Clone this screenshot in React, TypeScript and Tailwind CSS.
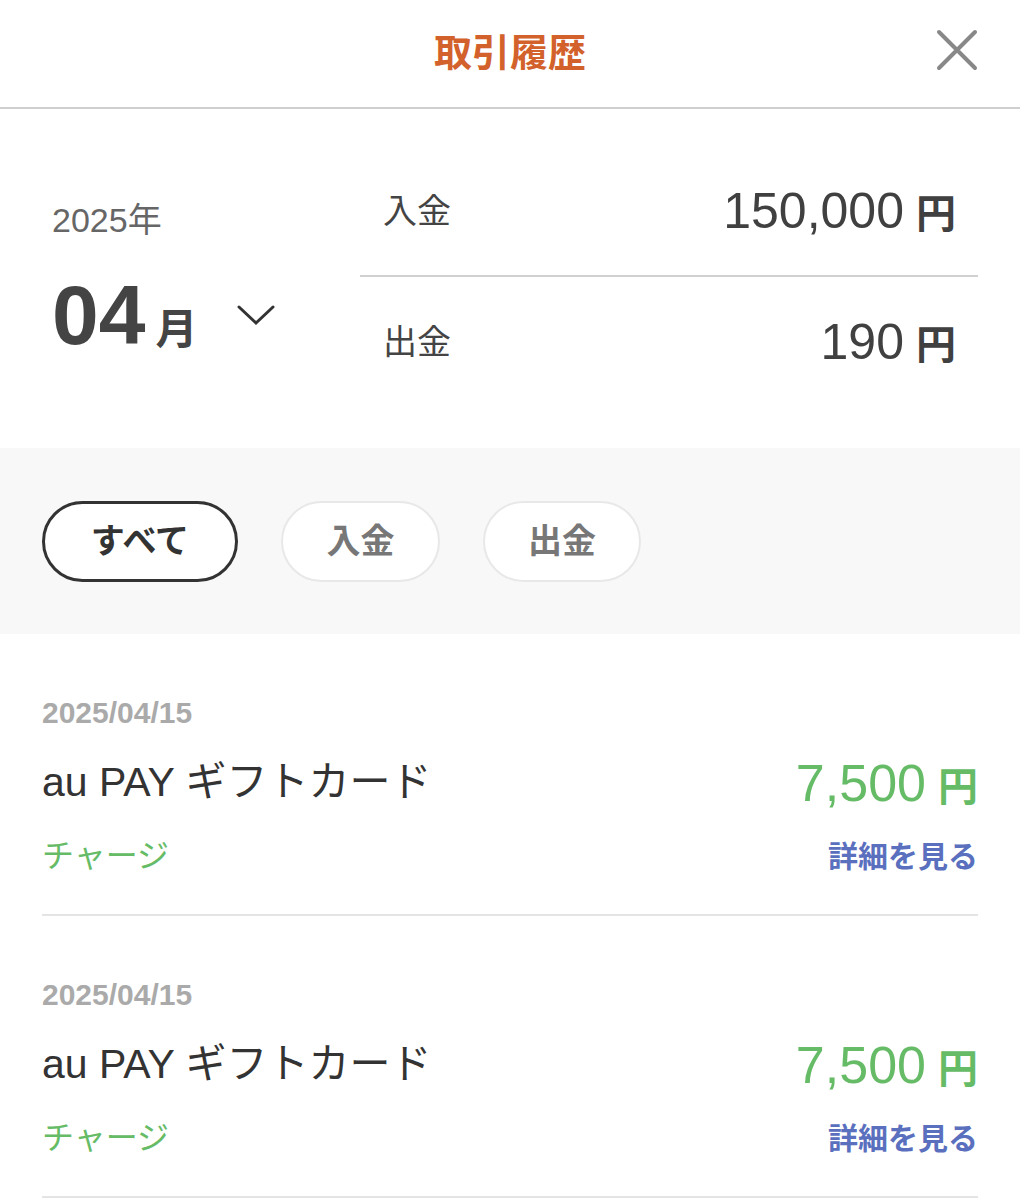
import React from "react";

const font = { fontFamily: '"Liberation Sans", "Noto Sans CJK JP", sans-serif' };

type Tx = { date: string; name: string; kind: string; amount: string };

const txs: Tx[] = [
  { date: "2025/04/15", name: "au PAY ギフトカード", kind: "チャージ", amount: "7,500" },
  { date: "2025/04/15", name: "au PAY ギフトカード", kind: "チャージ", amount: "7,500" },
];

function SummaryRow({ label, amount, line }: { label: string; amount: string; line?: boolean }) {
  return (
    <div
      className={`flex h-[130px] items-center justify-between pl-[23px] pr-[22px] ${
        line ? "border-b-2 border-[#d0d0d0]" : ""
      }`}
    >
      <span className="text-[34px] text-[#444]">{label}</span>
      <span className="flex items-baseline text-[#404040]">
        <span className="text-[50px] leading-none">{amount}</span>
        <span className="ml-[12px] text-[40px] font-bold leading-none">円</span>
      </span>
    </div>
  );
}

function Pill({ label, active, w }: { label: string; active?: boolean; w: string }) {
  return (
    <button
      className={`${w} flex h-[81px] items-center justify-center rounded-full bg-white text-[34px] font-bold ${
        active ? "border-[3px] border-[#333] text-[#333]" : "border-2 border-[#e8e8e8] text-[#777]"
      }`}
    >
      {label}
    </button>
  );
}

function TxItem({ tx }: { tx: Tx }) {
  return (
    <div className="border-b-2 border-[#e4e4e4] pb-[38px]">
      <div className="mt-[64px] h-[30px] text-[30px] font-bold leading-[30px] text-[#aaa]">{tx.date}</div>
      <div className="mt-[27px] flex h-[56px] items-center justify-between">
        <span className="text-[41px] text-[#333]">{tx.name}</span>
        <span className="flex items-baseline text-[#66bb66]">
          <span className="text-[52px] leading-none">{tx.amount}</span>
          <span className="ml-[12px] text-[40px] font-bold leading-none">円</span>
        </span>
      </div>
      <div className="mt-[25px] flex h-[40px] items-center justify-between">
        <span className="text-[32px] text-[#66bb66]">{tx.kind}</span>
        <span className="text-[30px] font-bold text-[#5a70be]">詳細を見る</span>
      </div>
    </div>
  );
}

export default function App() {
  return (
    <div className="min-h-[1200px] w-[1020px] bg-white" style={font}>
      {/* Header */}
      <header className="grid h-[109px] grid-cols-[1fr_auto_1fr] items-center border-b-2 border-[#cfcfcf]">
        <div />
        <h1 className="text-[38px] font-bold text-[#d3612b]">取引履歴</h1>
        <div className="flex justify-end pr-[42px]">
          <svg width="42" height="42" viewBox="0 0 42 42" className="mt-[-8px]">
            <path d="M3 3 L39 39 M39 3 L3 39" stroke="#888" strokeWidth="4" strokeLinecap="round" />
          </svg>
        </div>
      </header>

      {/* Summary */}
      <section className="flex h-[339px]">
        <div className="w-[360px] pl-[52px] pt-[94px]">
          <div className="text-[34px] leading-[34px] text-[#666]">2025年</div>
          <div className="mt-[36px] flex items-baseline text-[#444]">
            <span className="text-[84px] font-bold leading-none">04</span>
            <span className="ml-[10px] text-[42px] font-bold leading-none">月</span>
            <svg width="38" height="22" viewBox="0 0 38 22" className="ml-[40px] self-center">
              <path d="M2 3 L19 19 L36 3" fill="none" stroke="#333" strokeWidth="3" strokeLinecap="round" />
            </svg>
          </div>
        </div>
        <div className="flex-1 pr-[42px] pt-[38px]">
          <SummaryRow label="入金" amount="150,000" line />
          <SummaryRow label="出金" amount="190" />
        </div>
      </section>

      {/* Filters */}
      <section className="flex h-[186px] gap-[43px] bg-[#f8f8f8] px-[42px] pt-[53px]">
        <Pill label="すべて" active w="w-[196px]" />
        <Pill label="入金" w="w-[159px]" />
        <Pill label="出金" w="w-[158px]" />
      </section>

      {/* Transactions */}
      <section className="px-[42px]">
        {txs.map((tx, i) => (
          <TxItem key={i} tx={tx} />
        ))}
      </section>
    </div>
  );
}
